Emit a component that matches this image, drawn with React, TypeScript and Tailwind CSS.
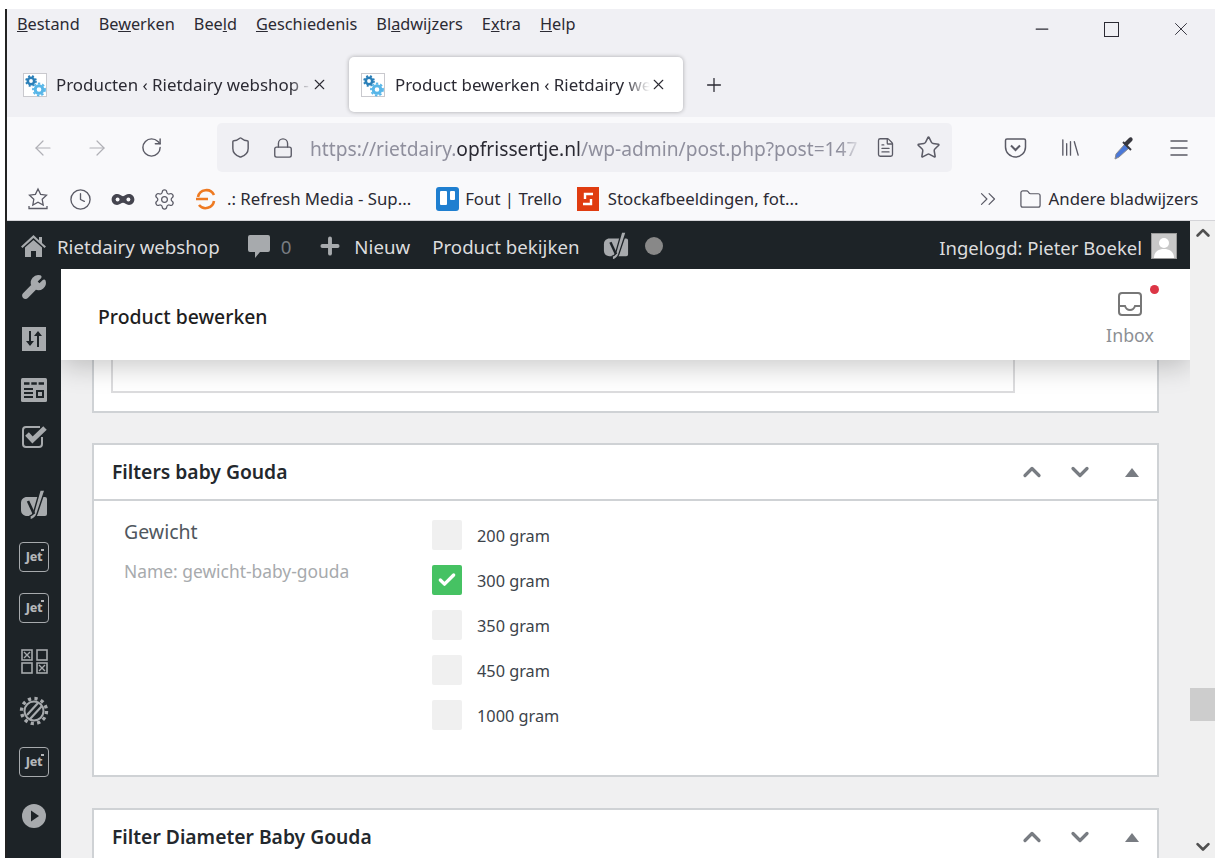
import { ReactNode } from 'react'
import { ArrowLeft, ArrowRight, RotateCw, Shield, Lock, Star, FileText, Library, Menu, Plus, X, Clock, Settings, Folder, ChevronsRight, ChevronUp, ChevronDown, Minus, Check, Wrench } from 'lucide-react'

const ui = { fontFamily: '"Noto Sans", "Open Sans", sans-serif' }

function Favicon() {
  return (
    <svg width="24" height="24" viewBox="0 0 24 24" className="shrink-0">
      <rect x="0.5" y="0.5" width="23" height="23" fill="#fff" stroke="#c9c9ce" />
      <circle cx="8" cy="8" r="3.2" fill="none" stroke="#2a7fb8" strokeWidth="2.6" />
      <circle cx="8" cy="8" r="5" fill="none" stroke="#2a7fb8" strokeWidth="1.6" strokeDasharray="2 2" />
      <circle cx="16" cy="16.500" r="3.800" fill="none" stroke="#58b6e8" strokeWidth="3" />
      <circle cx="16" cy="16.500" r="6" fill="none" stroke="#58b6e8" strokeWidth="1.800" strokeDasharray="2.400 2" />
    </svg>
  )
}

function Tab({ title, active }: { title: string; active?: boolean }) {
  if (active) {
    return (
      <div className="w-[334px] h-[55px] bg-white rounded-[5px] shadow-[0_0_4px_rgba(0,0,0,0.3)] flex items-center pl-[12px] pr-[16px]">
        <Favicon />
        <span className="ml-[10px] text-[16.9px] text-[#2b2a33] whitespace-nowrap overflow-hidden flex-1 [mask-image:linear-gradient(to_right,black_90%,transparent)]">{title}</span>
        <X size={17} strokeWidth={1.6} className="text-[#2b2a33] shrink-0" />
      </div>
    )
  }
  return (
    <div className="w-[342px] h-[55px] flex items-center pl-[16px] pr-[21px]">
      <Favicon />
      <span className="ml-[9px] text-[16.9px] text-[#2b2a33] whitespace-nowrap overflow-hidden flex-1 [mask-image:linear-gradient(to_right,black_92%,transparent)]">{title}</span>
      <X size={17} strokeWidth={1.6} className="text-[#2b2a33] shrink-0" />
    </div>
  )
}

function JetIcon() {
  return (
    <div className="w-[30px] h-[30px] rounded-[4px] border border-[#a7aaad] flex items-center justify-center relative">
      <span className="text-[12.5px] font-extrabold tracking-tight text-[#b4b6b9] leading-none">Jet</span>
      <div className="absolute top-[6px] right-[4px] w-[3px] h-[1.5px] bg-[#b4b6b9]" />
    </div>
  )
}

function YoastIcon({ w = 28, h = 32 }: { w?: number; h?: number }) {
  return (
    <svg width={w} height={h} viewBox="0 0 28 32">
      <path d="M7 8h18a2 2 0 0 1 2 2v15a2 2 0 0 1-2 2H7c-3.500 0-6-2.500-6-6V14c0-3.500 2.500-6 6-6z" fill="#a7aaad" />
      <path d="M20 1h5l-8 24c-1 3-3 5-7 6v-4c2-.5 3-1.500 3.500-3z" fill="#a7aaad" stroke="#1d2327" strokeWidth="1.400" />
      <path d="M8 12l6 13" stroke="#1d2327" strokeWidth="2.600" />
    </svg>
  )
}

function GridIcon() {
  return (
    <svg width="27" height="25" viewBox="0 0 27 25" fill="none" stroke="#a7aaad" strokeWidth="1.600">
      <rect x="1" y="1" width="10" height="10" />
      <rect x="16" y="1" width="10" height="10" />
      <rect x="1" y="14" width="10" height="10" />
      <rect x="16" y="14" width="10" height="10" />
      <path d="M3 3l6 6M9 3l-6 6M18 16l6 6M24 16l-6 6" strokeWidth="1.400" />
    </svg>
  )
}

function GearSlashIcon() {
  return (
    <svg width="30" height="30" viewBox="0 0 30 30" fill="none" stroke="#a7aaad">
      <circle cx="15" cy="15" r="9.500" strokeWidth="2" />
      <circle cx="15" cy="15" r="12.500" strokeWidth="3.400" strokeDasharray="3.200 3.350" />
      <path d="M8 19L19 7M11 23L23 10" strokeWidth="2.200" />
    </svg>
  )
}

function SlidersIcon() {
  return (
    <svg width="24" height="24" viewBox="0 0 24 24">
      <rect width="24" height="24" fill="#a7aaad" />
      <path d="M8 4v14M16 6v14" stroke="#1d2327" strokeWidth="2" />
      <path d="M4 14h8l-4 5zM12 9h8l-4-5z" fill="#1d2327" />
    </svg>
  )
}

function TableIcon() {
  return (
    <svg width="26" height="24" viewBox="0 0 26 24">
      <rect width="26" height="24" rx="1.500" fill="#a7aaad" />
      <path d="M3 5.500h20" stroke="#1d2327" strokeWidth="2.400" strokeDasharray="5.500 1.800" />
      <rect x="3" y="10" width="9" height="2" fill="#1d2327" />
      <rect x="3" y="14" width="9" height="2" fill="#1d2327" />
      <rect x="3" y="18" width="9" height="2" fill="#1d2327" />
      <rect x="15" y="12" width="8" height="8" fill="#1d2327" />
      <rect x="17" y="14" width="4" height="4" fill="#a7aaad" />
    </svg>
  )
}

function CheckBoxIcon() {
  return (
    <svg width="26" height="26" viewBox="0 0 26 26" fill="none">
      <path d="M21 14v7a3 3 0 0 1-3 3H5a3 3 0 0 1-3-3V7a3 3 0 0 1 3-3h14" stroke="#a7aaad" strokeWidth="2" />
      <path d="M6 11l5.500 6L24 5" stroke="#a7aaad" strokeWidth="5" />
    </svg>
  )
}

function PlayIcon() {
  return (
    <svg width="26" height="26" viewBox="0 0 26 26">
      <circle cx="13" cy="13" r="12" fill="#a7aaad" />
      <path d="M10 7.500l8 5.500-8 5.500z" fill="#1d2327" />
    </svg>
  )
}

// sidebar rows: each icon with the space above it
const sideItems: { icon: ReactNode; cls: string }[] = [
  { icon: <Wrench size={26} fill="#a7aaad" stroke="#a7aaad" />, cls: 'mt-[5px]' },
  { icon: <SlidersIcon />, cls: 'mt-[27px]' },
  { icon: <TableIcon />, cls: 'mt-[27px]' },
  { icon: <CheckBoxIcon />, cls: 'mt-[21px]' },
  { icon: <YoastIcon />, cls: 'mt-[40px]' },
  { icon: <JetIcon />, cls: 'mt-[21px]' },
  { icon: <JetIcon />, cls: 'mt-[21px]' },
  { icon: <GridIcon />, cls: 'mt-[26px]' },
  { icon: <GearSlashIcon />, cls: 'mt-[22px]' },
  { icon: <JetIcon />, cls: 'mt-[21px]' },
  { icon: <PlayIcon />, cls: 'mt-[26px]' },
]

const sizes = ['200 gram', '300 gram', '350 gram', '450 gram', '1000 gram']

function PanelHead({ title }: { title: string }) {
  return (
    <div className="h-[54px] flex items-center pl-[18px] pr-[18px] shrink-0">
      <h2 className="text-[19.3px] font-semibold text-[#23282d] flex-1">{title}</h2>
      <ChevronUp size={28} strokeWidth={2.800} className="text-[#787c82] mr-[20px]" />
      <ChevronDown size={28} strokeWidth={2.800} className="text-[#787c82] mr-[31px]" />
      <div className="w-0 h-0 border-l-[7px] border-r-[7px] border-b-[9px] border-l-transparent border-r-transparent border-b-[#787c82]" />
    </div>
  )
}

export default function App() {
  return (
    <div style={ui} className="w-[1215px] h-[858px] bg-white pt-[9px] pl-[5px] overflow-hidden">
      <div className="h-[849px] border-l-2 border-[#222] flex flex-col overflow-hidden">

        {/* browser chrome */}
        <div className="bg-[#f0f0f4] h-[108px] shrink-0">
          <div className="h-[30px] flex items-center pl-[10px]">
            <div className="flex gap-[19px] text-[16.3px] text-[#2b2a33] flex-1">
              <span><u>B</u>estand</span>
              <span>Be<u>w</u>erken</span>
              <span>Bee<u>l</u>d</span>
              <span><u>G</u>eschiedenis</span>
              <span>Bl<u>a</u>dwijzers</span>
              <span>E<u>x</u>tra</span>
              <span><u>H</u>elp</span>
            </div>
            <div className="flex items-center mt-[10px] text-[#2b2a33]">
              <Minus size={20} strokeWidth={1.500} />
              <div className="w-[15px] h-[15px] border-[1.5px] border-[#2b2a33] ml-[52px]" />
              <X size={22} strokeWidth={1} className="ml-[51px] mr-[23px]" />
            </div>
          </div>
          <div className="flex items-center mt-[18px]">
            <Tab title="Producten ‹ Rietdairy webshop -" />
            <Tab active title="Product bewerken ‹ Rietdairy we" />
            <Plus size={22} strokeWidth={1.400} className="ml-[20px] text-[#2b2a33]" />
          </div>
        </div>

        {/* toolbar */}
        <div className="bg-[#f9f9fb] h-[61px] shrink-0 flex items-center text-[#5b5b66]">
          <ArrowLeft size={24} strokeWidth={1.200} className="ml-[24px] text-[#b0b0b6]" />
          <ArrowRight size={24} strokeWidth={1.200} className="ml-[30px] text-[#b0b0b6]" />
          <RotateCw size={23} strokeWidth={1.500} className="ml-[31px]" />
          <div className="w-[735px] h-[49px] ml-[54px] rounded-[5px] bg-[#f0f0f4] flex items-center pl-[12px]">
            <Shield size={23} strokeWidth={1.500} />
            <Lock size={22} strokeWidth={1.500} className="ml-[20px]" />
            <span className="ml-[16px] mt-[3px] text-[19.2px] text-[#8f8f9d] w-[552px] whitespace-nowrap overflow-hidden [mask-image:linear-gradient(to_right,black_96%,transparent)]">
              https://rietdairy.<span className="text-[#2b2a33]">opfrissertje.nl</span>/wp-admin/post.php?post=147
            </span>
            <FileText size={21} strokeWidth={1.500} className="ml-[13px]" />
            <Star size={25} strokeWidth={1.500} className="ml-[20px]" />
          </div>
          <svg width="23" height="22" viewBox="0 0 23 22" fill="none" stroke="currentColor" strokeWidth="1.500" className="ml-[52px]">
            <path d="M3 2h17a1.500 1.500 0 0 1 1.500 1.500V10a10 10 0 0 1-20 0V3.500A1.500 1.500 0 0 1 3 2z" />
            <path d="M7 8.500l4.500 4.500L16 8.500" strokeWidth="2" />
          </svg>
          <Library size={23} strokeWidth={1.400} className="ml-[32px]" />
          <svg width="26" height="26" viewBox="0 0 26 26" className="ml-[30px]">
            <path d="M3 24l1-5 9-10 4 4-10 9z" fill="#4a78d8" stroke="#8a8a90" strokeWidth="1" />
            <path d="M12 8l3 3 5-5c2-2-1-5-3-3z" fill="#38383f" />
            <path d="M11 7l8 8" stroke="#38383f" strokeWidth="2" />
          </svg>
          <Menu size={24} strokeWidth={1.500} className="ml-[29px]" />
        </div>

        {/* bookmarks */}
        <div className="bg-[#f9f9fb] h-[43px] shrink-0 border-b border-[#d4d4d8] flex items-center text-[16.8px] text-[#2b2a33]">
          <svg width="22" height="24" viewBox="0 0 22 24" fill="none" stroke="#5b5b66" strokeWidth="1.300" className="ml-[20px]">
            <path d="M11 2l2.600 5.400 5.900.8-4.300 4.100 1 5.800L11 15.300 5.800 18.100l1-5.800L2.500 8.200l5.900-.8z" />
            <path d="M2 19v2.500h18V19" />
          </svg>
          <Clock size={23} strokeWidth={1.400} className="ml-[20px] text-[#5b5b66]" />
          <svg width="24" height="13" viewBox="0 0 22 12" className="ml-[19px]">
            <path d="M5.500 1c2.500 0 4 2 5.500 2s3-2 5.500-2C19.500 1 21.500 3.500 21.500 6s-2 5-5 5c-2.500 0-4-2-5.500-2s-3 2-5.500 2c-3 0-5-2.500-5-5s2-5 5-5z" fill="#45454f" />
            <circle cx="6" cy="6" r="1.800" fill="#f9f9fb" />
            <circle cx="16" cy="6" r="1.800" fill="#f9f9fb" />
          </svg>
          <Settings size={23} strokeWidth={1.300} className="ml-[18px] text-[#5b5b66]" />
          <svg width="22" height="24" viewBox="0 0 22 24" fill="none" stroke="#ee7a22" strokeWidth="2.600" className="ml-[19px]">
            <path d="M3 10a8.500 8.500 0 0 1 16-2" />
            <path d="M1 12h12M19 14a8.500 8.500 0 0 1-15 4" />
          </svg>
          <span className="ml-[10px]">.: Refresh Media - Sup...</span>
          <div className="w-[23px] h-[24px] ml-[25px] rounded-[3px] bg-[#1f7fd0] flex gap-[3px] p-[4px] shrink-0">
            <div className="w-[7px] h-[14px] bg-white rounded-[1px]" />
            <div className="w-[5px] h-[9px] bg-white rounded-[1px]" />
          </div>
          <span className="ml-[6px]">Fout | Trello</span>
          <div className="w-[22px] h-[24px] ml-[15px] bg-[#e03c10] flex items-center justify-center shrink-0">
            <svg width="12" height="14" viewBox="0 0 12 14" fill="none" stroke="#fff" strokeWidth="2.400">
              <path d="M11 2H3v5M1 12h8V7" />
            </svg>
          </div>
          <span className="ml-[9px] whitespace-nowrap">Stockafbeeldingen, fot...</span>
          <ChevronsRight size={26} strokeWidth={1.100} className="ml-[176px] text-[#5b5b66] shrink-0" />
          <Folder size={23} strokeWidth={1.300} className="ml-[18px] text-[#5b5b66] shrink-0" />
          <span className="ml-[7px] whitespace-nowrap">Andere bladwijzers</span>
        </div>

        {/* wp-admin page */}
        <div className="flex flex-1 min-h-0">
          <div className="w-[1183px] flex flex-col min-h-0">
            <div className="h-[48px] pt-[2px] bg-[#1d2327] text-[#dcdcde] text-[18.7px] flex items-center shrink-0 relative z-20">
              <svg width="25" height="24" viewBox="0 0 25 24" fill="#a7aaad" className="ml-[14px]">
                <path d="M12.500 1L0 12.500l1.500 1.500L12.500 4l11 10 1.500-1.500L21 9V3h-3v3.200z" />
                <path d="M12.500 6L4 13.500V23h6v-6h5v6h6v-9.500z" />
              </svg>
              <span className="ml-[11px] mt-[3px]">Rietdairy webshop</span>
              <svg width="24" height="25" viewBox="0 0 24 25" fill="#a7aaad" className="ml-[27px]">
                <path d="M3 1h18a2 2 0 0 1 2 2v13a2 2 0 0 1-2 2h-8l-5 6v-6H3a2 2 0 0 1-2-2V3a2 2 0 0 1 2-2z" />
              </svg>
              <span className="ml-[10px] mt-[3px] text-[#787c82]">0</span>
              <Plus size={26} strokeWidth={3.600} className="ml-[26px] text-[#a7aaad]" />
              <span className="ml-[11px] mt-[3px]">Nieuw</span>
              <span className="ml-[22px] mt-[3px]">Product bekijken</span>
              <div className="ml-[24px]"><YoastIcon w={26} h={30} /></div>
              <div className="w-[18px] h-[18px] rounded-full bg-[#888] ml-[16px]" />
              <span className="ml-auto mt-[3px] text-[18.5px]">Ingelogd: Pieter Boekel</span>
              <div className="w-[26px] h-[26px] ml-[9px] mr-[13px] bg-[#c8c8c8] border border-[#999] flex items-end justify-center overflow-hidden">
                <svg width="20" height="22" viewBox="0 0 20 22" fill="#fff">
                  <circle cx="10" cy="7" r="5" />
                  <path d="M0 22c0-6 4-9 10-9s10 3 10 9z" />
                </svg>
              </div>
            </div>

            <div className="flex flex-1 min-h-0">
              <aside className="w-[54px] bg-[#1d2327] shrink-0 flex flex-col items-center">
                {sideItems.map((item, i) => (
                  <div key={i} className={item.cls}>
                    {item.icon}
                  </div>
                ))}
              </aside>

              <main className="flex-1 min-w-0 bg-[#f0f0f1] flex flex-col overflow-hidden">
                <header className="h-[91px] shrink-0 bg-white flex items-center relative z-10 shadow-[0_6px_26px_rgba(0,0,0,0.22)]">
                  <h1 className="ml-[37px] mt-[4px] text-[19.4px] font-medium text-[#1e1e1e] flex-1">Product bewerken</h1>
                  <div className="mr-[35px] w-[50px] h-full pt-[22px] flex flex-col items-center relative text-[#8c8f94]">
                    <svg width="26" height="26" viewBox="0 0 26 26" fill="none" stroke="#777" strokeWidth="2" className="shrink-0">
                      <rect x="2" y="2" width="22" height="22" rx="3" />
                      <path d="M2 15h6c1 3 3 4 5 4s4-1 5-4h6" />
                    </svg>
                    <span className="text-[17.8px] leading-[24px] mt-[6px]">Inbox</span>
                    <div className="absolute w-[9px] h-[9px] rounded-full bg-[#dc3545] top-[16px] right-[-4px]" />
                  </div>
                </header>

                <div className="pl-[31px] pr-[31px]">
                  <section className="h-[53px] bg-white border-x-2 border-b-2 border-[#cfd2d5] pl-[17px]">
                    <div className="w-[904px] h-[33px] border-x-2 border-b-2 border-[#dcdcde]" />
                  </section>

                  <section className="h-[334px] mt-[30px] bg-white border-2 border-[#cfd2d5] flex flex-col">
                    <PanelHead title="Filters baby Gouda" />
                    <div className="flex-1 border-t-2 border-[#cfd2d5] flex pt-[19px]">
                      <div className="w-[338px] pl-[30px] shrink-0">
                        <div className="text-[19.5px] leading-[24px] text-[#50575e]">Gewicht</div>
                        <div className="text-[17.4px] leading-[22px] text-[#a7aaad] mt-[16px]">Name: gewicht-baby-gouda</div>
                      </div>
                      <div className="flex flex-col gap-[15px]">
                        {sizes.map((s, i) => (
                          <div key={s} className="flex items-center h-[30px]">
                            {i === 1 ? (
                              <div className="w-[30px] h-[30px] rounded-[2px] bg-[#46c263] flex items-center justify-center">
                                <Check size={20} strokeWidth={4} className="text-white" />
                              </div>
                            ) : (
                              <div className="w-[30px] h-[30px] rounded-[2px] bg-[#f0f0f0]" />
                            )}
                            <span className="ml-[15px] mt-[2px] text-[16.3px] text-[#3c434a]">{s}</span>
                          </div>
                        ))}
                      </div>
                    </div>
                  </section>

                  <section className="h-[120px] mt-[31px] bg-white border-2 border-[#cfd2d5]">
                    <PanelHead title="Filter Diameter Baby Gouda" />
                  </section>
                </div>
              </main>
            </div>
          </div>

          {/* page scrollbar */}
          <div className="w-[25px] bg-[#f0f0f0] relative z-30 flex flex-col items-center">
            <ChevronUp size={22} strokeWidth={3} className="text-[#505050] mt-[1px]" />
            <div className="w-full h-[34px] bg-[#cdcdcd] mt-[444px]" />
            <ChevronDown size={22} strokeWidth={3} className="text-[#505050] mt-[115px]" />
          </div>
        </div>
      </div>
    </div>
  )
}
